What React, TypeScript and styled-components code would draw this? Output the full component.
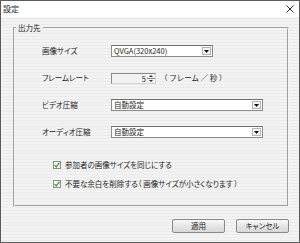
import styled, { createGlobalStyle } from 'styled-components'

const GlobalStyle = createGlobalStyle`
  html, body {
    margin: 0;
    padding: 0;
    background: #ffffff;
  }
  body {
    font-family: "Noto Sans CJK JP", "Noto Sans", sans-serif;
  }
`

const Window = styled.div`
  width: 300px;
  height: 243px;
  box-sizing: border-box;
  border: 1px solid #5c5c5c;
  display: flex;
  flex-direction: column;
  color: #1e1e1e;
  font-size: 7.5px;
  background: repeating-linear-gradient(
    to bottom,
    #f3f3f3 0px,
    #f3f3f3 2px,
    #ebebeb 2px,
    #ebebeb 3px
  );
`

const TitleBar = styled.div`
  height: 16px;
  flex: none;
  background: #ffffff;
  display: flex;
  align-items: center;
  justify-content: space-between;
  padding: 0 5px 0 2px;
`

const Title = styled.span`
  font-size: 8px;
  line-height: 10px;
`

const Body = styled.div`
  flex: 1;
  display: flex;
  flex-direction: column;
  padding: 6px 10px 0 12px;
`

const GroupBox = styled.fieldset`
  margin: 0;
  padding: 0;
  border: 2px groove #f4f4f4;
  min-width: 0;
`

const Legend = styled.legend`
  margin-left: 1px;
  padding: 0 2px;
  line-height: 10px;
  font-feature-settings: "palt";
`

const Grid = styled.div`
  display: grid;
  grid-template-columns: 69px 1fr;
  grid-auto-rows: 12px;
  row-gap: 15px;
  align-items: center;
  justify-items: start;
  padding: 12px 0 0 27px;
`

const Label = styled.span`
  line-height: 10px;
  font-feature-settings: "palt";
`

const Combo = styled.div<{ $w: number }>`
  width: ${({ $w }) => $w}px;
  height: 12px;
  box-sizing: border-box;
  background: #ffffff;
  border: 1px solid #8c8c8c;
  border-top-color: #6e6e6e;
  display: flex;
  align-items: center;
  justify-content: space-between;
  padding: 0 1px 0 2px;
`

const ComboText = styled.span`
  line-height: 10px;
`

const DropButton = styled.span`
  width: 9px;
  height: 8px;
  box-sizing: border-box;
  border: 1px solid #b4b4b4;
  background: #f4f4f4;
  display: flex;
  align-items: center;
  justify-content: center;
`

const RateRow = styled.div`
  display: flex;
  align-items: center;
  gap: 4px;
`

const SpinBox = styled.div`
  width: 45px;
  height: 11px;
  box-sizing: border-box;
  background: #f2f2f2;
  border: 1px solid #8c8c8c;
  border-right-color: #d4d4d4;
  border-bottom-color: #d4d4d4;
  display: flex;
  align-items: center;
  justify-content: flex-end;
`

const SpinValue = styled.span`
  line-height: 9px;
  padding-right: 1px;
`

const SpinArrows = styled.span`
  width: 8px;
  height: 9px;
  display: flex;
  flex-direction: column;
`

const SpinHalf = styled.span<{ $top?: boolean }>`
  flex: 1;
  display: flex;
  align-items: center;
  justify-content: center;
  border-bottom: ${({ $top }) => ($top ? '1px solid #8a8a8a' : 'none')};
`

const Unit = styled.span`
  line-height: 10px;
`

const Checks = styled.div`
  display: flex;
  flex-direction: column;
  gap: 9px;
  padding: 22px 0 16px 38px;
`

const CheckRow = styled.label`
  display: flex;
  align-items: center;
  gap: 4px;
  height: 10px;
  line-height: 10px;
`

const CheckBox = styled.span`
  width: 8px;
  height: 8px;
  box-sizing: border-box;
  background: #ffffff;
  border: 1px solid #8e8e8e;
  display: flex;
  align-items: center;
  justify-content: center;
`

const CheckText = styled.span`
  font-feature-settings: "palt";
`

const Footer = styled.div`
  display: flex;
  justify-content: flex-end;
  gap: 11px;
  padding-top: 12px;
`

const Button = styled.button`
  width: 53px;
  height: 14px;
  box-sizing: border-box;
  margin: 0;
  padding: 0;
  border: 1px solid #8a8a8a;
  border-radius: 2px;
  background: linear-gradient(to bottom, #f8f8f8, #e4e4e4 55%, #d8d8d8);
  font-family: inherit;
  font-size: 7.5px;
  line-height: 12px;
  color: #1e1e1e;
  font-feature-settings: "palt";
`

const Arrow = ({ up = false, small = false }: { up?: boolean; small?: boolean }) => {
  const w = small ? 4 : 5
  const h = small ? 2 : 3
  return (
    <svg width={w} height={h} viewBox={`0 0 ${w} ${h}`}>
      <path
        d={up ? `M0 ${h} L${w / 2} 0 L${w} ${h} Z` : `M0 0 L${w} 0 L${w / 2} ${h} Z`}
        fill={small ? '#333' : '#111'}
      />
    </svg>
  )
}

const ComboBox = ({ width, value }: { width: number; value: string }) => (
  <Combo $w={width}>
    <ComboText>{value}</ComboText>
    <DropButton>
      <Arrow />
    </DropButton>
  </Combo>
)

const Check = ({ children }: { children: string }) => (
  <CheckRow>
    <CheckBox>
      <svg width="6" height="6" viewBox="0 0 6 6">
        <path d="M0.6 3.1 L2.3 4.9 L5.5 0.6" fill="none" stroke="#3a9a2c" strokeWidth="1.3" />
      </svg>
    </CheckBox>
    <CheckText>{children}</CheckText>
  </CheckRow>
)

export default function App() {
  return (
    <>
      <GlobalStyle />
      <Window>
        <TitleBar>
          <Title>設定</Title>
          <svg width="8" height="8" viewBox="0 0 8 8">
            <path d="M0.5 0.5 L7.5 7.5 M7.5 0.5 L0.5 7.5" stroke="#2a2a2a" strokeWidth="1" />
          </svg>
        </TitleBar>
        <Body>
          <GroupBox>
            <Legend>出力先</Legend>
            <Grid>
              <Label>画像サイズ</Label>
              <ComboBox width={102} value="QVGA(320x240)" />
              <Label>フレームレート</Label>
              <RateRow>
                <SpinBox>
                  <SpinValue>5</SpinValue>
                  <SpinArrows>
                    <SpinHalf $top>
                      <Arrow up small />
                    </SpinHalf>
                    <SpinHalf>
                      <Arrow small />
                    </SpinHalf>
                  </SpinArrows>
                </SpinBox>
                <Unit>（ フレーム ／ 秒 ）</Unit>
              </RateRow>
              <Label>ビデオ圧縮</Label>
              <ComboBox width={152} value="自動設定" />
              <Label>オーディオ圧縮</Label>
              <ComboBox width={152} value="自動設定" />
            </Grid>
            <Checks>
              <Check>参加者の画像サイズを同じにする</Check>
              <Check>不要な余白を削除する（ 画像サイズが小さくなります ）</Check>
            </Checks>
          </GroupBox>
          <Footer>
            <Button>適用</Button>
            <Button>キャンセル</Button>
          </Footer>
        </Body>
      </Window>
    </>
  )
}
